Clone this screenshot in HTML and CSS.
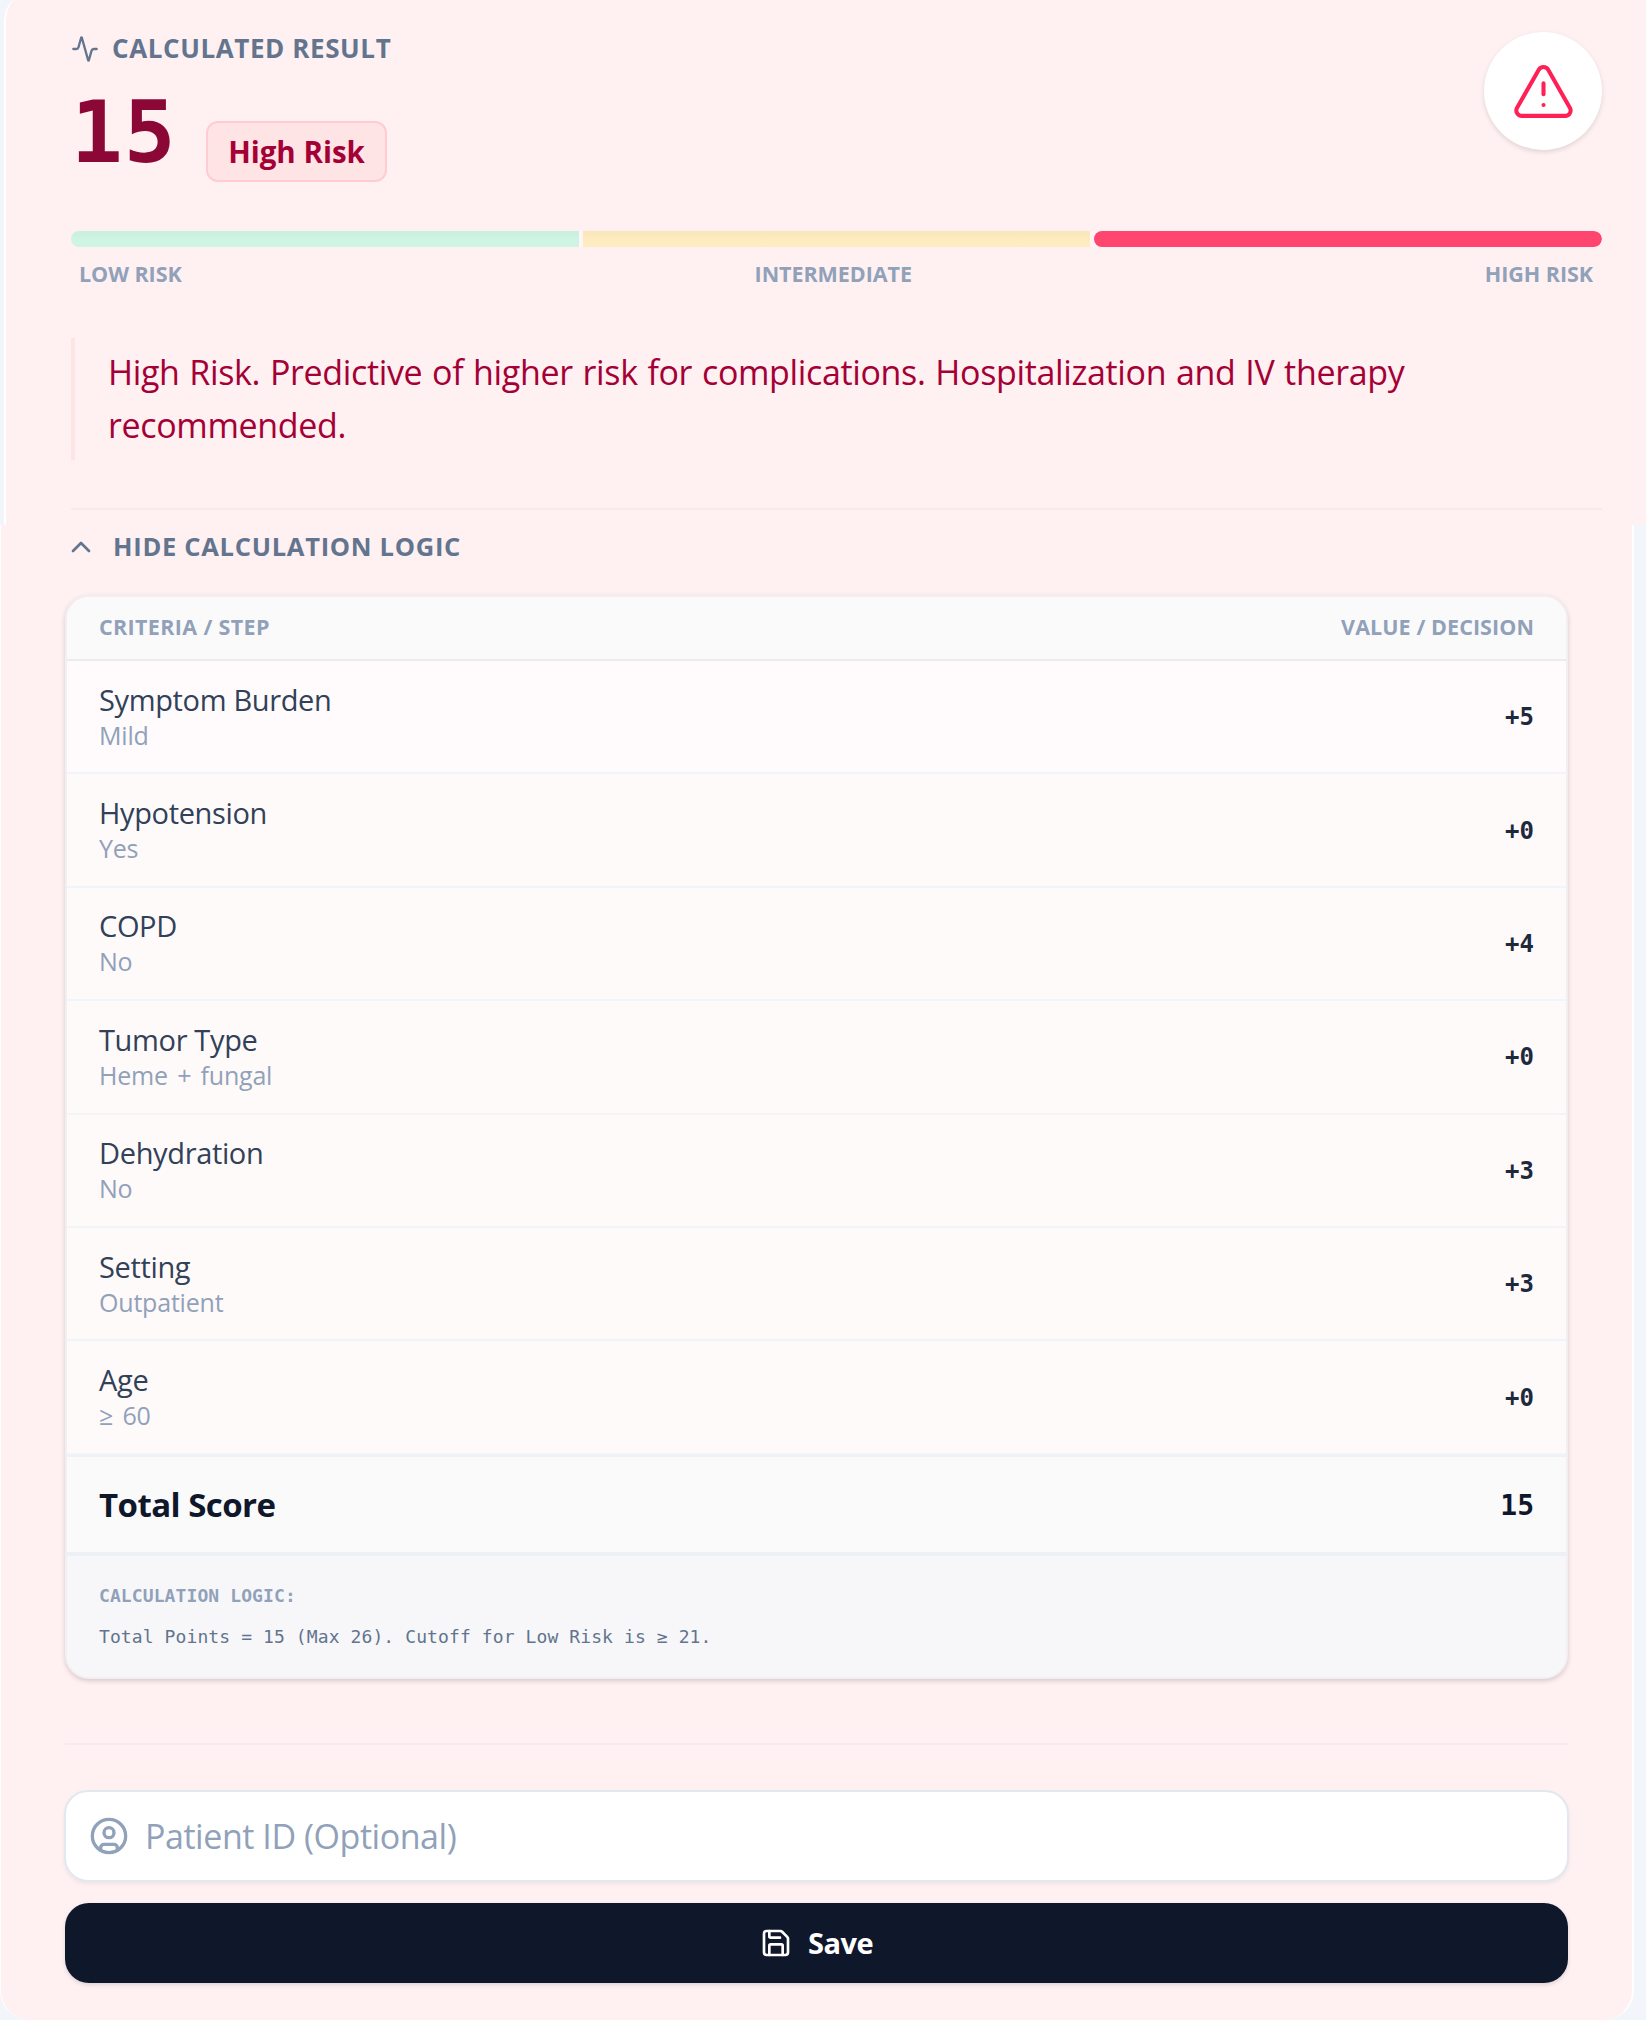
FILE: index.html
```html
<!DOCTYPE html>
<html lang="en">
<head>
    <meta charset="UTF-8">
    <meta name="viewport" content="width=device-width, initial-scale=1.0">
    <title>Calculated Result</title>
    <link rel="stylesheet" href="styles.css">
</head>
<body>
    <section class="result">
        <div class="result-head">
            <div class="result-main">
                <div class="eyebrow">
                    <svg class="icon-activity" viewBox="0 0 24 24"><path d="M22 12h-2.48a2 2 0 0 0-1.93 1.46l-2.35 8.36a.25.25 0 0 1-.48 0L9.24 2.18a.25.25 0 0 0-.48 0l-2.35 8.36A2 2 0 0 1 4.49 12H2"/></svg>
                    <span class="eyebrow-text">CALCULATED RESULT</span>
                </div>
                <div class="score-row">
                    <span class="score">15</span>
                    <span class="badge">High Risk</span>
                </div>
            </div>
            <div class="alert-circle">
                <svg class="icon-alert" viewBox="0 0 24 24"><path d="m21.73 18-8-14a2 2 0 0 0-3.48 0l-8 14A2 2 0 0 0 4 21h16a2 2 0 0 0 1.73-3"/><path d="M12 9v4"/><path d="M12 17h.01"/></svg>
            </div>
        </div>

        <div class="risk-bar">
            <div class="segment low"></div>
            <div class="segment mid"></div>
            <div class="segment high"></div>
        </div>
        <div class="risk-labels">
            <span>LOW RISK</span>
            <span>INTERMEDIATE</span>
            <span>HIGH RISK</span>
        </div>

        <p class="summary">High Risk. Predictive of higher risk for complications. Hospitalization and IV therapy<br>recommended.</p>
        <div class="divider"></div>
    </section>

    <section class="details">
        <div class="toggle">
            <svg class="icon-chevron" viewBox="0 0 24 24"><path d="m18 15-6-6-6 6"/></svg>
            <span class="toggle-text">HIDE CALCULATION LOGIC</span>
        </div>

        <div class="logic-card">
            <div class="logic-header">
                <span class="col-step">CRITERIA / STEP</span>
                <span>VALUE / DECISION</span>
            </div>
            <div class="row first">
                <div><h4>Symptom Burden</h4><p>Mild</p></div>
                <span class="points">+5</span>
            </div>
            <div class="row">
                <div><h4>Hypotension</h4><p>Yes</p></div>
                <span class="points">+0</span>
            </div>
            <div class="row">
                <div><h4>COPD</h4><p>No</p></div>
                <span class="points">+4</span>
            </div>
            <div class="row">
                <div><h4>Tumor Type</h4><p>Heme + fungal</p></div>
                <span class="points">+0</span>
            </div>
            <div class="row">
                <div><h4>Dehydration</h4><p>No</p></div>
                <span class="points">+3</span>
            </div>
            <div class="row">
                <div><h4>Setting</h4><p>Outpatient</p></div>
                <span class="points">+3</span>
            </div>
            <div class="row">
                <div><h4>Age</h4><p>≥ 60</p></div>
                <span class="points">+0</span>
            </div>
            <div class="total">
                <span class="total-label">Total Score</span>
                <span class="total-value">15</span>
            </div>
            <div class="formula">
                <div class="formula-title">CALCULATION LOGIC:</div>
                <div class="formula-text">Total Points = 15 (Max 26). Cutoff for Low Risk is ≥ 21.</div>
            </div>
        </div>

        <div class="save-area">
            <label class="patient">
                <svg class="icon-user" viewBox="0 0 24 24"><circle cx="12" cy="12" r="10"/><circle cx="12" cy="10" r="3"/><path d="M7 20.662V19a2 2 0 0 1 2-2h6a2 2 0 0 1 2 2v1.662"/></svg>
                <input type="text" placeholder="Patient ID (Optional)">
            </label>
            <button class="save">
                <svg class="icon-save" viewBox="0 0 24 24"><path d="M15.2 3a2 2 0 0 1 1.4.6l3.8 3.8a2 2 0 0 1 .6 1.4V19a2 2 0 0 1-2 2H5a2 2 0 0 1-2-2V5a2 2 0 0 1 2-2z"/><path d="M17 21v-7a1 1 0 0 0-1-1H8a1 1 0 0 0-1 1v7"/><path d="M7 3v4a1 1 0 0 0 1 1h7"/></svg>
                <span class="save-text">Save</span>
            </button>
        </div>
    </section>
</body>
</html>
```

FILE: styles.css
```css
* {
    box-sizing: border-box;
}
body {
    margin: 0;
    width: 1646px;
    height: 2020px;
    overflow: hidden;
    background-color: #f2f6fb;
    font-family: 'Open Sans', 'Noto Sans', sans-serif;
    color: #314158;
}
svg {
    display: block;
    flex: none;
    fill: none;
    stroke: currentColor;
    stroke-width: 2;
    stroke-linecap: round;
    stroke-linejoin: round;
}
h4, p {
    margin: 0;
}

/* result summary */
.result {
    height: 525px;
    margin-left: 4px;
    padding: 32px 44px 0 65px;
    border-left: 2px solid #fff;
    border-top-left-radius: 12px 24px;
    background-color: #fff0f1;
}
.result-head {
    display: flex;
    justify-content: space-between;
    height: 199px;
}
.eyebrow {
    display: flex;
    align-items: center;
    gap: 13px;
    height: 33px;
    color: #62748e;
}
.icon-activity {
    width: 28px;
    height: 28px;
}
.eyebrow-text {
    padding-bottom: 2px;
    font-size: 26px;
    line-height: 32px;
    font-weight: 700;
    letter-spacing: 0.6px;
    white-space: nowrap;
}
.score-row {
    display: flex;
    align-items: flex-start;
}
.score {
    width: 135px;
    margin-top: 17px;
    font-family: 'DejaVu Sans Mono', monospace;
    font-size: 86px;
    line-height: 100px;
    font-weight: 700;
    letter-spacing: 1px;
    color: #8b0836;
}
.badge {
    display: flex;
    align-items: center;
    justify-content: center;
    width: 181px;
    height: 61px;
    margin-top: 56px;
    border: 2px solid #ffccd3;
    border-radius: 12px;
    background-color: #ffe4e6;
    color: #a50036;
    font-size: 29.5px;
    line-height: 56px;
    font-weight: 700;
    white-space: nowrap;
}
.alert-circle {
    display: flex;
    align-items: center;
    justify-content: center;
    width: 118px;
    height: 118px;
    border-radius: 50%;
    background-color: #fff;
    color: #ff2056;
    box-shadow: 0 2px 5px rgba(0, 0, 0, 0.12);
}
.icon-alert {
    width: 65px;
    height: 65px;
    stroke-width: 1.5;
}
.risk-bar {
    display: flex;
    gap: 4px;
    height: 16px;
    border-radius: 8px;
    background-color: #fff5f7;
    overflow: hidden;
}
.segment {
    flex: 1;
}
.low {
    background: linear-gradient(#c9efdf, #cff4e3 60%);
}
.mid {
    background: linear-gradient(#f9e6b9, #feebbf 60%);
}
.high {
    border-radius: 8px;
    background-color: #ff466f;
}
.risk-labels {
    display: flex;
    justify-content: space-between;
    margin-top: 11px;
    padding: 0 9px 0 8px;
    font-size: 21.5px;
    line-height: 31px;
    font-weight: 700;
    letter-spacing: -0.05px;
    color: #90a1b9;
}
.summary {
    height: 122px;
    margin-top: 49px;
    padding: 8px 0 8px 33px;
    border-left: 4px solid #ffe4e6;
    font-size: 34px;
    line-height: 53px;
    letter-spacing: -0.35px;
    word-spacing: 1.3px;
    color: #a50036;
    white-space: nowrap;
}
.divider {
    height: 2px;
    margin-top: 48px;
    background-color: #f7e8ea;
}

/* calculation logic */
.details {
    height: 1495px;
    width: 1634px;
    padding: 5px 64px 0;
    border-left: 1px solid #fff;
    border-right: 2px solid #fff;
    border-radius: 0 0 30px 30px;
    background-color: #fff0f1;
}
.toggle {
    display: flex;
    align-items: center;
    gap: 16px;
    height: 34px;
    color: #62748e;
}
.icon-chevron {
    width: 32px;
    height: 32px;
}
.toggle-text {
    padding-bottom: 2px;
    font-size: 25.5px;
    font-weight: 700;
    letter-spacing: 0.72px;
}
.logic-card {
    height: 1084px;
    margin-top: 31px;
    border: 2px solid #f3eef1;
    border-radius: 24px;
    background-color: #fffafa;
    box-shadow: 0 2px 5px rgba(0, 0, 0, 0.16);
    overflow: hidden;
}
.logic-header {
    display: flex;
    align-items: center;
    justify-content: space-between;
    height: 64px;
    padding: 0 32px 3px 32px;
    border-bottom: 2px solid #eeebee;
    background-color: #fbfafb;
    font-size: 21.5px;
    font-weight: 700;
    letter-spacing: 0.08px;
    color: #90a1b9;
}
.col-step {
    letter-spacing: 0.35px;
}
.row {
    display: flex;
    align-items: center;
    justify-content: space-between;
    height: 113.4px;
    padding: 0 32px;
    border-bottom: 2px solid #f1f4f9;
}
.row.first {
    background-color: #fffbfc;
}
.row h4 {
    font-size: 29px;
    line-height: 39px;
    font-weight: 400;
    letter-spacing: -0.35px;
    color: #314158;
}
.row p {
    padding-bottom: 2px;
    font-size: 25px;
    line-height: 33px;
    letter-spacing: -0.2px;
    word-spacing: 3px;
    color: #90a1b9;
}
.points {
    padding-top: 1px;
    font-family: 'DejaVu Sans Mono', monospace;
    font-size: 24px;
    font-weight: 700;
    color: #1d293d;
}
.total {
    display: flex;
    align-items: center;
    justify-content: space-between;
    height: 101px;
    padding: 0 32px;
    border-top: 2px solid #edf2f7;
    border-bottom: 4px solid #edf0f5;
    background-color: #fbfafb;
    font-weight: 700;
    color: #0f172b;
}
.total-label {
    font-size: 33px;
    letter-spacing: -0.55px;
}
.total-value {
    padding-top: 2px;
    font-family: 'DejaVu Sans Mono', monospace;
    font-size: 28px;
}
.formula {
    height: 126px;
    padding: 24px 32px;
    background-color: #f7f7f9;
    font-family: 'DejaVu Sans Mono', monospace;
    font-size: 18px;
    letter-spacing: 0.1px;
    color: #62748e;
}
.formula-title {
    line-height: 32px;
    font-weight: 700;
    color: #90a1b9;
}
.formula-text {
    margin-top: 9px;
    line-height: 32px;
}

/* save */
.save-area {
    margin-top: 64px;
    padding-top: 45px;
    border-top: 2px solid #f4ebf2;
}
.patient {
    display: flex;
    align-items: center;
    gap: 16px;
    height: 92px;
    margin: 0 -1px;
    padding: 0 23px;
    border: 2px solid #e2e8f0;
    border-radius: 24px;
    background-color: #fff;
    box-shadow: 0 2px 4px rgba(0, 0, 0, 0.06);
    color: #90a1b9;
}
.icon-user {
    width: 40px;
    height: 40px;
}
.patient input {
    flex: 1;
    padding: 0;
    border: none;
    outline: none;
    background: none;
    font-family: inherit;
    font-size: 34px;
    letter-spacing: -0.45px;
}
.patient input::placeholder {
    color: #90a1b9;
}
.save {
    display: flex;
    align-items: center;
    justify-content: center;
    gap: 16px;
    width: 100%;
    height: 80px;
    margin-top: 21px;
    border: none;
    border-radius: 24px;
    background-color: #0f172a;
    color: #fff;
    font-family: inherit;
    font-size: 29px;
    font-weight: 700;
    box-shadow: 0 2px 4px rgba(0, 0, 0, 0.12);
}
.save-text {
    padding-bottom: 2px;
    letter-spacing: -0.5px;
}
.icon-save {
    width: 32px;
    height: 32px;
}
```
